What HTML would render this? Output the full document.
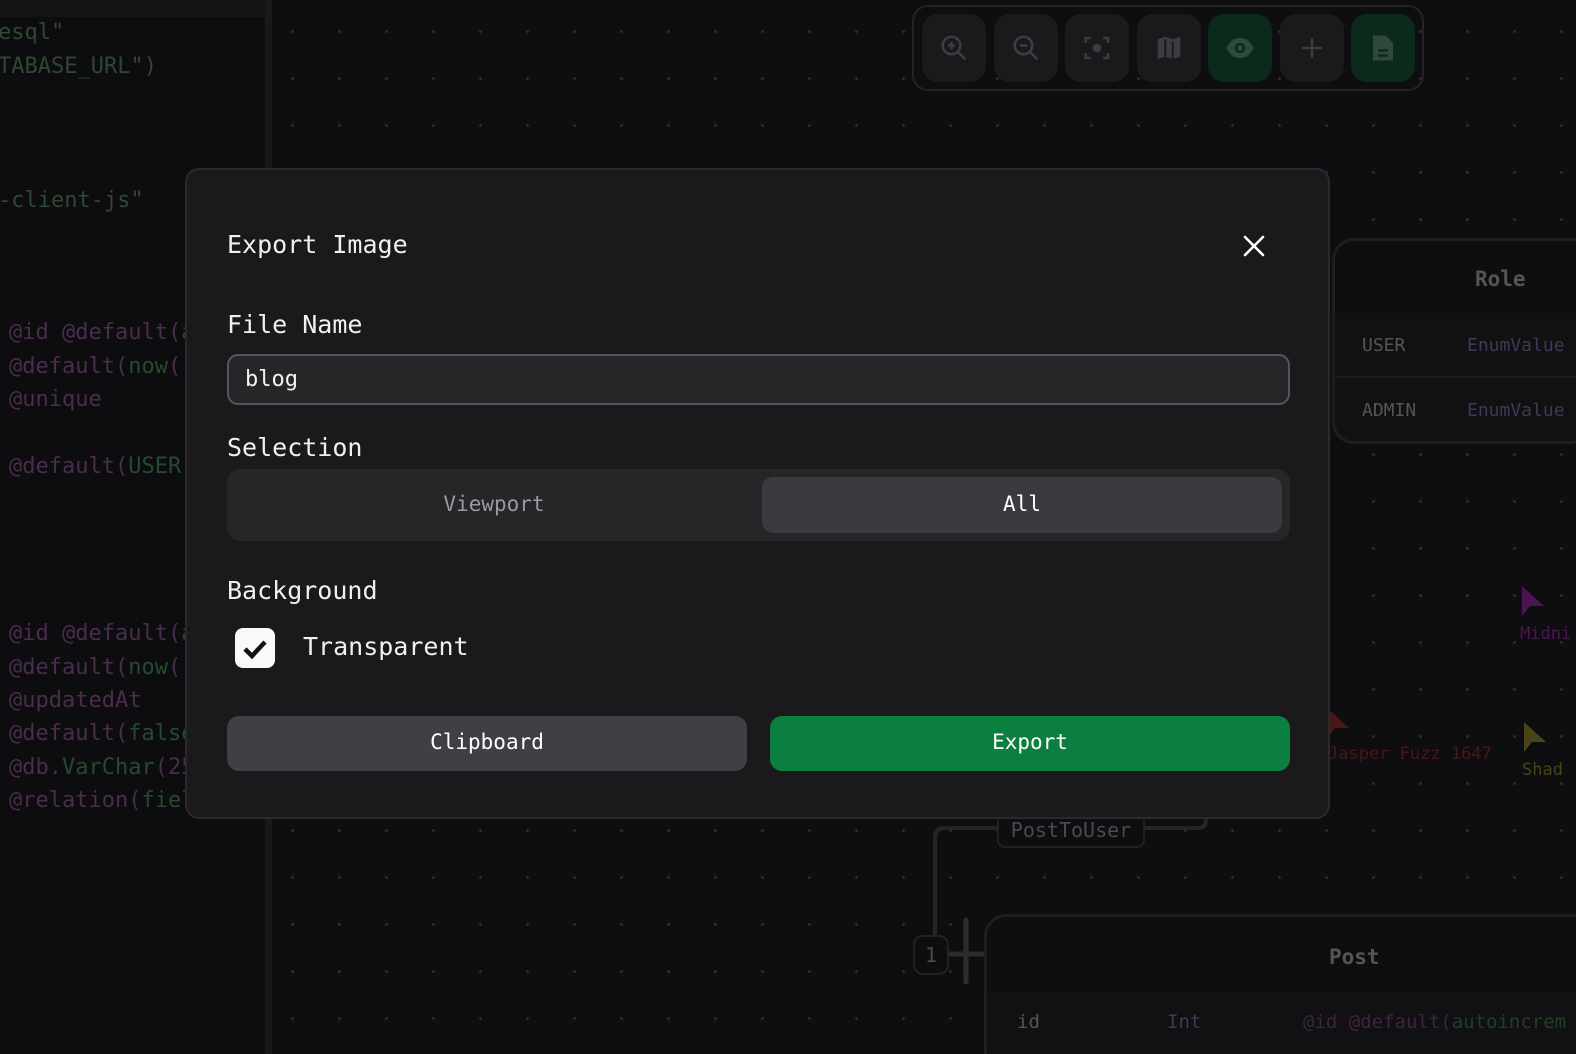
<!DOCTYPE html>
<html style="overflow:hidden"><head><meta charset="utf-8"><style>
*{box-sizing:border-box;margin:0;padding:0}
html,body{width:1576px;height:1054px;overflow:hidden}
body{background:#0e0e10;font-family:"DejaVu Sans Mono","Liberation Mono",monospace}
#root{position:relative;width:1576px;height:1054px;overflow:hidden}
.canvas{position:absolute;left:272px;top:0;right:0;bottom:0;background-color:#0e0e10;background-image:radial-gradient(circle,#2e2e33 1.2px,transparent 1.6px);background-size:47px 47px;background-position:-3px 8px}
.left{position:absolute;left:0;top:0;width:265px;height:1054px;background:#0d0d0f;overflow:hidden}
.left .strip{position:absolute;left:0;top:0;width:265px;height:17px;background:#141416}
.divider{position:absolute;left:265px;top:0;width:7px;height:1054px;background:#19191c}
.code{position:absolute;font-size:22px;white-space:pre;color:#2d4a32;font-family:"DejaVu Sans Mono",monospace}
.p{color:#4a2c4c}.g{color:#244a30}
.tb{position:absolute;left:912px;top:5px;width:512px;height:86px;border:2px solid #232327;border-radius:16px}
.tbb{position:absolute;top:14px;width:64px;height:68px;border-radius:16px;background:#1a1a1d;display:flex;align-items:center;justify-content:center}
.tbb.gr{background:#0b2a1b}
.dlg{position:absolute;left:185px;top:168px;width:1145px;height:651px;background:#1a1a1d;border:2px solid #2a2a2e;border-radius:14px;color:#f2f2f2}
.lbl{position:absolute;left:40px;font-size:25px;color:#f0f0f0;font-weight:500}
.node{position:absolute;border:3px solid #1e1e21;border-radius:22px;background:#111113;font-family:"DejaVu Sans Mono",monospace;color:#555}
</style></head><body><div id="root">
<div class="left"><div class="strip"></div>
<div class="code" style="left:-2px;top:20px;color:#2e4832">esql"</div>
<div class="code" style="left:-2px;top:54px;color:#2e4832">TABASE_URL")</div>
<div class="code" style="left:-2px;top:188px;color:#2e4832">-client-js"</div>
<div class="code" style="left:9px;top:320px"><span class="p">@id @default(</span><span class="g">a</span></div>
<div class="code" style="left:9px;top:354px"><span class="p">@default(</span><span class="g">now</span><span class="p">()</span></div>
<div class="code" style="left:9px;top:387px"><span class="p">@unique</span></div>
<div class="code" style="left:9px;top:454px"><span class="p">@default(</span><span class="g">USER</span><span class="p">)</span></div>
<div class="code" style="left:9px;top:621px"><span class="p">@id @default(</span><span class="g">a</span></div>
<div class="code" style="left:9px;top:655px"><span class="p">@default(</span><span class="g">now</span><span class="p">()</span></div>
<div class="code" style="left:9px;top:688px"><span class="p">@updatedAt</span></div>
<div class="code" style="left:9px;top:721px"><span class="p">@default(</span><span class="g">false</span></div>
<div class="code" style="left:9px;top:755px"><span class="p">@db.</span><span class="g">VarChar</span><span class="p">(25</span></div>
<div class="code" style="left:9px;top:788px"><span class="p">@relation(</span><span class="g">fiel</span></div>
</div>
<div class="divider"></div>
<div class="canvas"></div>

<div class="tb"></div>
<div class="tbb" style="left:922px"><svg width="30" height="30" viewBox="0 0 24 24" fill="none" stroke="#3c3c41" stroke-width="2"><circle cx="10" cy="10" r="7"/><path d="M15 15l6 6M10 7v6M7 10h6"/></svg></div>
<div class="tbb" style="left:994px"><svg width="30" height="30" viewBox="0 0 24 24" fill="none" stroke="#3c3c41" stroke-width="2"><circle cx="10" cy="10" r="7"/><path d="M15 15l6 6M7 10h6"/></svg></div>
<div class="tbb" style="left:1065px"><svg width="30" height="30" viewBox="0 0 24 24" fill="none" stroke="#3c3c41" stroke-width="2"><path d="M3 8V4h4M17 4h4v4M21 16v4h-4M7 20H3v-4"/><circle cx="12" cy="12" r="2.5" fill="#3c3c41"/></svg></div>
<div class="tbb" style="left:1137px"><svg width="30" height="30" viewBox="0 0 24 24" fill="#3c3c41"><path d="M3 5l6-2 6 2 6-2v16l-6 2-6-2-6 2z"/><path d="M9 5v14M15 7v14" stroke="#1a1a1d" stroke-width="1.5"/></svg></div>
<div class="tbb gr" style="left:1208px"><svg width="34" height="30" viewBox="0 0 24 24"><path d="M1 12C4 6 8 4 12 4s8 2 11 8c-3 6-7 8-11 8S4 18 1 12z" fill="#2f4a3c"/><circle cx="12" cy="12" r="3.2" fill="none" stroke="#0b2a1b" stroke-width="2"/></svg></div>
<div class="tbb" style="left:1280px"><svg width="26" height="26" viewBox="0 0 24 24" stroke="#3c3c41" stroke-width="2"><path d="M12 3v18M3 12h18"/></svg></div>
<div class="tbb gr" style="left:1351px"><svg width="26" height="30" viewBox="0 0 20 24"><path d="M2 2h10l6 6v14H2z" fill="#2f4a3c"/><path d="M6 14h8M6 18h8" stroke="#0b2a1b" stroke-width="2"/></svg></div>

<div class="node" style="left:1332px;top:238px;width:260px;height:206px">
<div style="position:absolute;left:0;top:0;right:0;height:72px;background:#0e0e10;border-radius:20px 20px 0 0"></div>
<div style="position:absolute;left:140px;top:26px;font-size:21px;font-weight:bold;color:#555">Role</div>
<div style="position:absolute;left:27px;top:94px;font-size:18px;color:#555">USER</div>
<div style="position:absolute;left:132px;top:94px;font-size:18px;color:#3d3a55">EnumValue</div>
<div style="position:absolute;left:0;right:0;top:135px;height:2px;background:#1c1c1f"></div>
<div style="position:absolute;left:27px;top:159px;font-size:18px;color:#555">ADMIN</div>
<div style="position:absolute;left:132px;top:159px;font-size:18px;color:#3d3a55">EnumValue</div>
</div>

<svg style="position:absolute;left:1520px;top:586px" width="30" height="34"><path d="M2 0v30l8-10h14z" fill="#4a1550"/></svg>
<div style="position:absolute;left:1520px;top:624px;font-size:17px;color:#4a1550">Midni</div>
<svg style="position:absolute;left:1325px;top:708px" width="30" height="34"><path d="M2 0v30l8-10h14z" fill="#4a1616"/></svg>
<div style="position:absolute;left:1328px;top:744px;font-size:17px;color:#4a1616">Jasper Fuzz 1647</div>
<svg style="position:absolute;left:1522px;top:722px" width="30" height="34"><path d="M2 0v30l8-10h14z" fill="#4a4318"/></svg>
<div style="position:absolute;left:1522px;top:760px;font-size:17px;color:#4a4318">Shad</div>

<svg style="position:absolute;left:900px;top:800px" width="320" height="200" fill="none"><path d="M306 10v10q0 8-8 8H45q-10 0-10 10v120" stroke="#252528" stroke-width="4"/><path d="M66 120v62M50 154h32" stroke="#2c2c2f" stroke-width="5" stroke-linecap="round"/></svg>
<div style="position:absolute;left:997px;top:812px;width:148px;height:36px;border:2px solid #222225;border-radius:8px;background:#0e0e10;color:#4a4a4e;font-size:20px;text-align:center;line-height:32px">PostToUser</div>
<div style="position:absolute;left:913px;top:935px;width:36px;height:40px;border:2px solid #222225;border-radius:10px;background:#0e0e10;color:#4a4a4e;font-size:20px;text-align:center;line-height:36px">1</div>
<div class="node" style="left:984px;top:914px;width:640px;height:160px">
<div style="position:absolute;left:0;top:0;right:0;height:74px;background:#0e0e10;border-radius:20px 20px 0 0"></div>
<div style="position:absolute;left:342px;top:28px;font-size:21px;font-weight:bold;color:#555">Post</div>
<div style="position:absolute;left:30px;top:94px;font-size:19px;color:#555">id</div>
<div style="position:absolute;left:180px;top:94px;font-size:19px;color:#3d3a55">Int</div>
<div style="position:absolute;left:316px;top:94px;font-size:19px;color:#3e2440">@id @default(<span style="color:#1f4028">autoincrem</span></div>
</div>

<div class="dlg">
<div class="lbl" style="top:60px;font-size:25px">Export Image</div>
<svg style="position:absolute;left:1055px;top:64px" width="24" height="24" stroke="#fff" stroke-width="2.6" stroke-linecap="round"><path d="M3 3l18 18M21 3L3 21"/></svg>
<div class="lbl" style="top:140px">File Name</div>
<div style="position:absolute;left:40px;top:184px;width:1063px;height:51px;background:#262629;border:2px solid #55555b;border-radius:11px;padding-left:16px;font-size:22px;line-height:47px;color:#f2f2f2">blog</div>
<div class="lbl" style="top:263px">Selection</div>
<div style="position:absolute;left:40px;top:299px;width:1063px;height:72px;background:#262629;border-radius:13px">
<div style="position:absolute;left:0;top:0;width:534px;height:72px;text-align:center;line-height:70px;font-size:21px;color:#9a9a9e">Viewport</div>
<div style="position:absolute;left:535px;top:8px;width:520px;height:56px;background:#3a3a3f;border-radius:11px;text-align:center;line-height:55px;font-size:21px;color:#fff">All</div>
</div>
<div class="lbl" style="top:406px">Background</div>
<div style="position:absolute;left:48px;top:458px;width:40px;height:40px;background:#f8f9fa;border-radius:8px"><svg width="40" height="40"><path d="M10 21l7 7 13-14" fill="none" stroke="#111" stroke-width="4.5"/></svg></div>
<div class="lbl" style="left:116px;top:462px">Transparent</div>
<div style="position:absolute;left:40px;top:546px;width:520px;height:55px;background:#3f4045;border-radius:12px;text-align:center;line-height:53px;font-size:21px;color:#fff">Clipboard</div>
<div style="position:absolute;left:583px;top:546px;width:520px;height:55px;background:#0a7f3f;border-radius:12px;text-align:center;line-height:53px;font-size:21px;color:#fff">Export</div>
</div>
</div></body></html>
